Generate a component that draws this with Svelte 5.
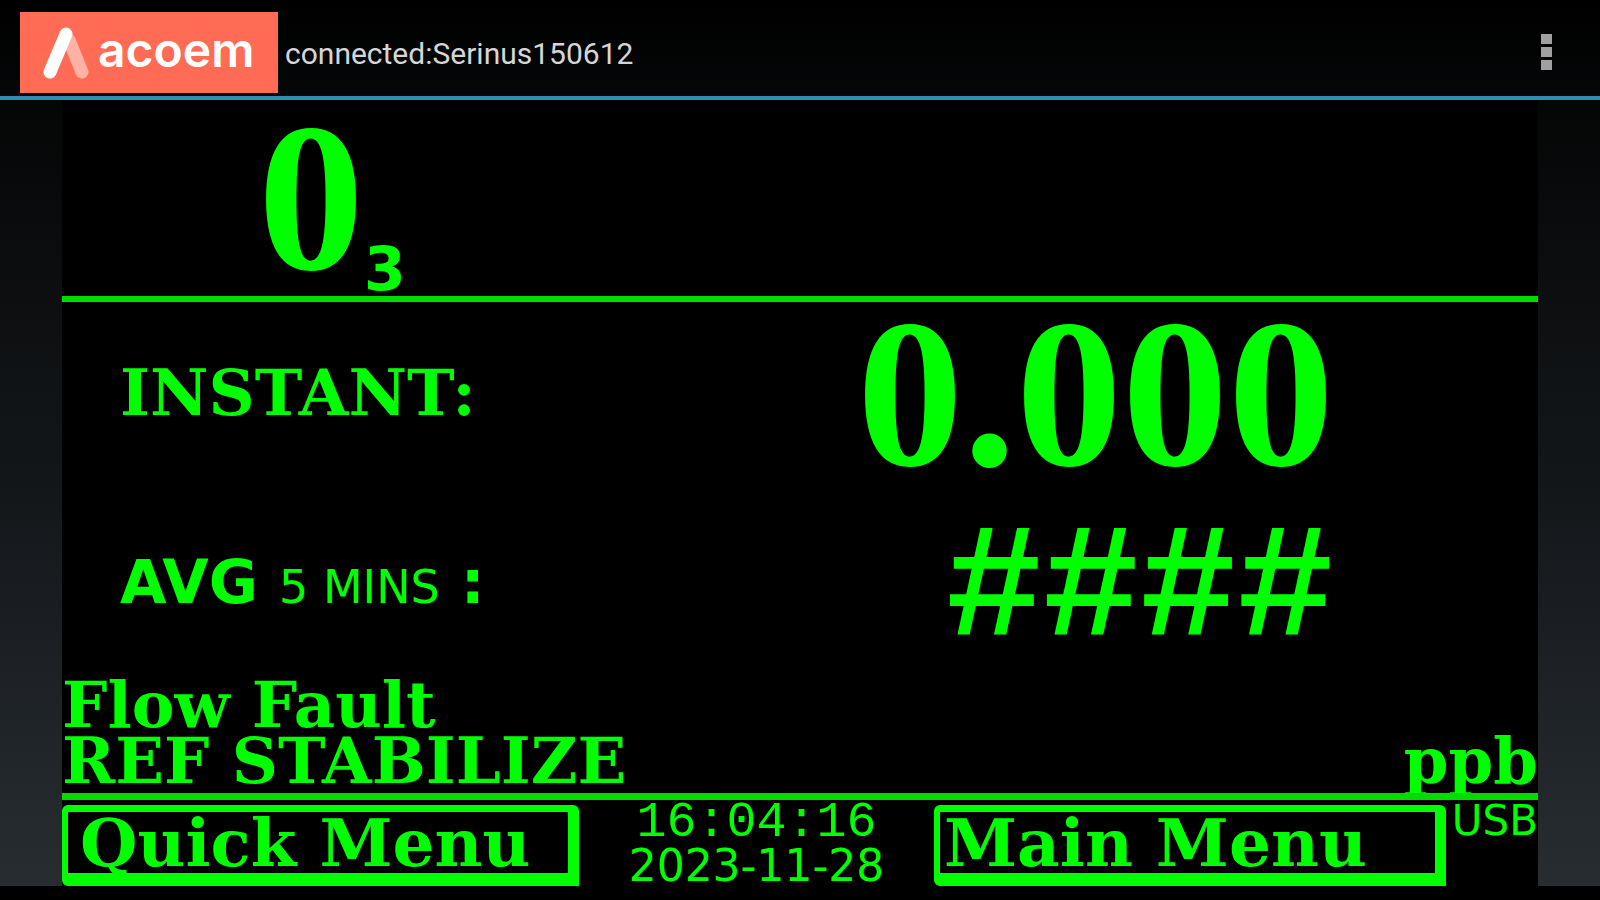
<script>
  const device = 'connected:Serinus150612';
  const reading = { instant: '0.000', average: '####', unit: 'ppb' };
  const status = ['Flow Fault', 'REF STABILIZE'];
</script>

<div class="app">
  <header>
    <div class="logo">
      <svg viewBox="0 0 48 54" aria-hidden="true">
        <path d="M27 14 L40 46" stroke="#ffb1a5" stroke-width="13" stroke-linecap="round" />
        <path d="M24 8 L8 46" stroke="#fff" stroke-width="13" stroke-linecap="round" />
      </svg>
      <span>acoem</span>
    </div>
    <h1>{device}</h1>
    <button class="more" aria-label="More options"><i></i><i></i><i></i></button>
  </header>

  <main>
    <div class="screen">
      <section class="gas"><span class="big">0</span><sub>3</sub></section>

      <section class="readings">
        <div class="row first">
          <span class="label">INSTANT:</span>
          <span class="big">{reading.instant}</span>
        </div>
        <div class="row second">
          <span class="label avg">AVG <small>5 MINS</small> :</span>
          <span class="hashes">{reading.average}</span>
        </div>
        <div class="status">
          <div>
            {#each status as line}<p>{line}</p>{/each}
          </div>
          <p>{reading.unit}</p>
        </div>
      </section>

      <footer>
        <button class="soft quick">Quick Menu</button>
        <div class="clock">
          <time class="time">16:04:16</time>
          <time class="date">2023-11-28</time>
        </div>
        <button class="soft">Main Menu</button>
        <span class="usb">USB</span>
      </footer>
    </div>
  </main>
</div>

<style>
  :global(body) { margin: 0; background: #000; }
  .app {
    min-height: 100vh;
    box-sizing: border-box;
    padding-bottom: 14px;
    display: flex;
    flex-direction: column;
    background: #000;
    color: #0f0;
    font-family: "DejaVu Serif", serif;
    font-weight: 700;
  }
  header {
    height: 84px;
    padding: 12px 40px 0 20px;
    display: flex;
    align-items: flex-start;
    border-bottom: 4px solid #2f8db5;
    background: linear-gradient(#000, #050607);
  }
  .logo {
    width: 258px;
    height: 81px;
    box-sizing: border-box;
    padding-left: 22px;
    display: flex;
    align-items: center;
    gap: 8px;
    background: #ff6b55;
    color: #fff;
    font: 600 48px/72px Inter, sans-serif;
  }
  .logo svg { width: 48px; height: 54px; fill: none; flex: none; }
  .logo span { padding-bottom: 6px; }
  h1 {
    margin: 0 0 0 7px;
    flex: 1;
    color: #d6d6d6;
    font: 400 30px/84px Roboto, sans-serif;
  }
  .more {
    margin-top: 16px;
    padding: 6px 8px;
    display: flex;
    flex-direction: column;
    gap: 3px;
    border: 0;
    background: none;
  }
  .more i { width: 11px; height: 10px; background: #a0a0a0; }
  main {
    flex: 1;
    display: flex;
    padding: 0 62px;
    background: linear-gradient(#050606, #14171a 50%, #282d32);
  }
  .screen { flex: 1; display: flex; flex-direction: column; background: #000; }
  .big { font: 700 212px/196px "Liberation Serif", serif; }
  .gas {
    height: 196px;
    padding-left: 196px;
    display: flex;
    align-items: flex-end;
    border-bottom: 6px solid #00dc00;
  }
  sub { font: 700 60px/54px "DejaVu Sans", sans-serif; }
  .readings { flex: 1; display: flex; flex-direction: column; }
  .row { display: flex; justify-content: space-between; padding: 0 204px 0 58px; }
  .first { height: 192px; }
  .first .big { line-height: 184px; }
  .second { height: 176px; }
  .label { font-size: 64px; line-height: 182px; }
  .avg {
    display: flex;
    align-items: baseline;
    gap: 21px;
    font: 700 60px/176px "DejaVu Sans", sans-serif;
  }
  small { font: 400 46px/60px "DejaVu Sans", sans-serif; }
  .hashes { font: 700 162px/196px "Liberation Mono", monospace; }
  .status {
    flex: 1;
    padding-bottom: 4px;
    display: flex;
    justify-content: space-between;
    align-items: flex-end;
  }
  p { margin: 0; font-size: 64px; line-height: 56px; white-space: nowrap; }
  footer {
    height: 86px;
    display: grid;
    grid-template-columns: minmax(0, 517fr) minmax(0, 355fr) minmax(0, 512fr) minmax(0, 92fr);
    align-items: start;
    border-top: 7px solid #00dc00;
  }
  .soft {
    height: 81px;
    margin-top: 5px;
    padding: 0 4px;
    text-align: left;
    white-space: nowrap;
    border: solid #0f0;
    border-width: 7px 11px 13px 6px;
    border-radius: 6px 6px 0 6px;
    background: #000;
    color: #0f0;
    font: 700 66px/56px "DejaVu Serif", serif;
  }
  .quick { padding-left: 12px; }
  .clock {
    padding-top: 2px;
    display: flex;
    flex-direction: column;
    align-items: center;
  }
  .time { font: 400 50px/42px "Liberation Mono", monospace; }
  .date { font: 400 44px/44px "DejaVu Sans", sans-serif; }
  .usb { text-align: right; font: 400 42px/42px "DejaVu Sans", sans-serif; }
</style>
